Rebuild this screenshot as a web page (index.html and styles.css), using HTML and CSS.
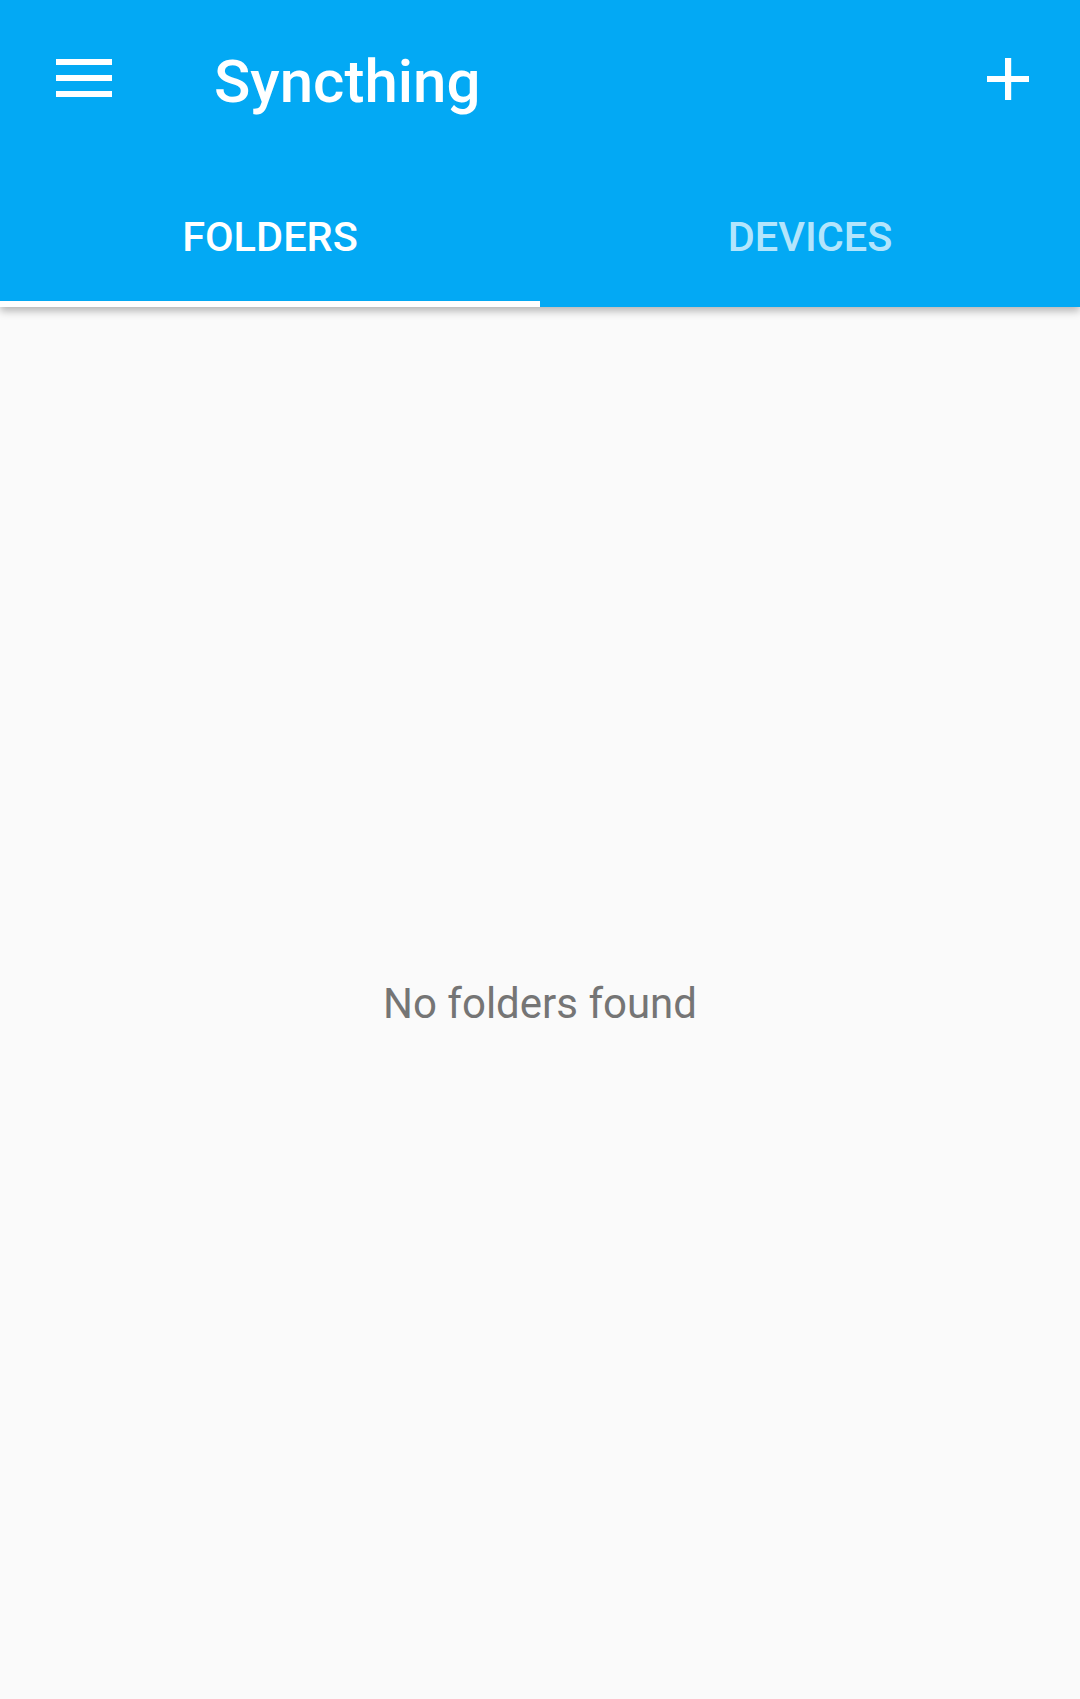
FILE: index.html
```html
<!DOCTYPE html>
<html>
<head>
<meta charset="utf-8">
<link rel="stylesheet" href="styles.css">
</head>
<body>
<div class="appbar">
  <div class="toolbar">
    <div class="nav-icon">
      <svg width="56" height="38" viewBox="0 0 56 38"><rect x="0" y="0" width="56" height="6" fill="#fff"/><rect x="0" y="16" width="56" height="6" fill="#fff"/><rect x="0" y="32" width="56" height="6" fill="#fff"/></svg>
    </div>
    <div class="title">Syncthing</div>
    <div class="action-icon">
      <svg width="42" height="42" viewBox="0 0 42 42"><rect x="18" y="0" width="6.2" height="42" fill="#fff"/><rect x="0" y="18" width="42" height="6" fill="#fff"/></svg>
    </div>
  </div>
  <div class="tabs">
    <div class="tab active">FOLDERS</div>
    <div class="tab">DEVICES</div>
  </div>
</div>
<main class="content">
  <p class="empty">No folders found</p>
</main>
</body>
</html>
```
FILE: styles.css
```css
html, body {
  margin: 0;
  padding: 0;
}
body {
  width: 1080px;
  height: 1699px;
  background: #fafafa;
  font-family: Roboto, "Noto Sans", sans-serif;
  display: flex;
  flex-direction: column;
  overflow: hidden;
}
.appbar {
  background: #03a9f4;
  box-shadow: 0 4px 8px rgba(0,0,0,0.28);
  position: relative;
  z-index: 1;
}
.toolbar {
  height: 158px;
  display: flex;
  align-items: center;
  padding-left: 56px;
  padding-right: 51px;
}
.nav-icon {
  display: flex;
  margin-bottom: 2px;
}
.title {
  margin-left: 102px;
  font-size: 60px;
  font-weight: 500;
  color: #fff;
  flex: 1;
  line-height: 1;
  padding-top: 5px;
}
.action-icon {
  display: flex;
}
.tabs {
  display: flex;
  height: 149px;
}
.tab {
  flex: 1;
  display: flex;
  align-items: center;
  justify-content: center;
  font-size: 41.5px;
  font-weight: 500;
  color: #b3e5fc;
  border-bottom: 6px solid transparent;
  box-sizing: border-box;
  padding-top: 14px;
}
.tab.active {
  color: #fff;
  border-bottom-color: #fff;
}
.content {
  flex: 1;
  display: flex;
  align-items: center;
  justify-content: center;
}
.empty {
  margin: 0;
  font-size: 42px;
  color: #757575;
}
```
